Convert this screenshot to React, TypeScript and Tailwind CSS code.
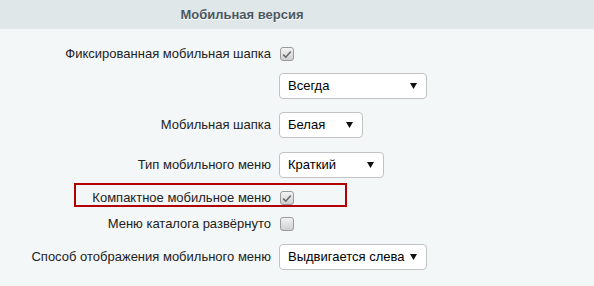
import { ReactNode } from "react";

function Checkbox({ checked }: { checked?: boolean }) {
  return (
    <div className="ml-px flex h-[14px] w-[14px] items-center justify-center rounded-[3px] border border-[#9a9a9a] bg-gradient-to-b from-[#f4f4f4] to-[#cfcfcf]">
      {checked && (
        <svg width="10" height="9" viewBox="0 0 10 9">
          <path d="M1.2 4.6 L3.8 7.2 L8.8 1.4" fill="none" stroke="#6a6a6a" strokeWidth="1.6" />
        </svg>
      )}
    </div>
  );
}

function Select({ value, width }: { value: string; width: string }) {
  return (
    <div
      className={`flex h-[26px] items-center justify-between rounded-[4px] border border-[#c2c2c2] bg-white pl-2 pr-[9px] text-[13px] text-black ${width}`}
    >
      <span>{value}</span>
      <svg width="7" height="6" viewBox="0 0 7 6">
        <path d="M0 0 H7 L3.5 6 Z" fill="#111" />
      </svg>
    </div>
  );
}

function Row({ label, children }: { label?: string; children: ReactNode }) {
  return (
    <div className="flex items-center">
      <div className="w-[271px] shrink-0 text-right text-[13px] leading-[14px] text-[#222]">{label}</div>
      <div className="ml-2">{children}</div>
    </div>
  );
}

export default function App() {
  return (
    <div className="h-[286px] w-[594px] overflow-hidden bg-[#f4f7f8]" style={{ fontFamily: '"Liberation Sans", Arial, sans-serif' }}>
      {/* Header */}
      <div className="flex h-[29px] items-center bg-[#dfe7e9]">
        <div className="w-[484px] text-center text-[13px] font-bold text-[#4b5760] [text-shadow:0_1px_0_#fff]">
          Мобильная версия
        </div>
      </div>

      {/* Settings */}
      <div className="flex flex-col gap-[13px] pt-[18px]">
        <Row label="Фиксированная мобильная шапка">
          <Checkbox checked />
        </Row>
        <div className="-mt-px">
          <Row>
            <Select value="Всегда" width="w-[148px]" />
          </Row>
        </div>
        <Row label="Мобильная шапка">
          <Select value="Белая" width="w-[84px]" />
        </Row>
        <div className="mt-px">
          <Row label="Тип мобильного меню">
            <Select value="Краткий" width="w-[105px]" />
          </Row>
        </div>
        <div className="relative">
          <div className="absolute left-[74px] top-[-8px] h-[24px] w-[273px] border-2 border-[#b30000]" />
          <Row label="Компактное мобильное меню">
            <Checkbox checked />
          </Row>
        </div>
        <div className="-mt-px">
          <Row label="Меню каталога развёрнуто">
            <Checkbox />
          </Row>
        </div>
        <Row label="Способ отображения мобильного меню">
          <Select value="Выдвигается слева" width="w-[148px]" />
        </Row>
      </div>
    </div>
  );
}
